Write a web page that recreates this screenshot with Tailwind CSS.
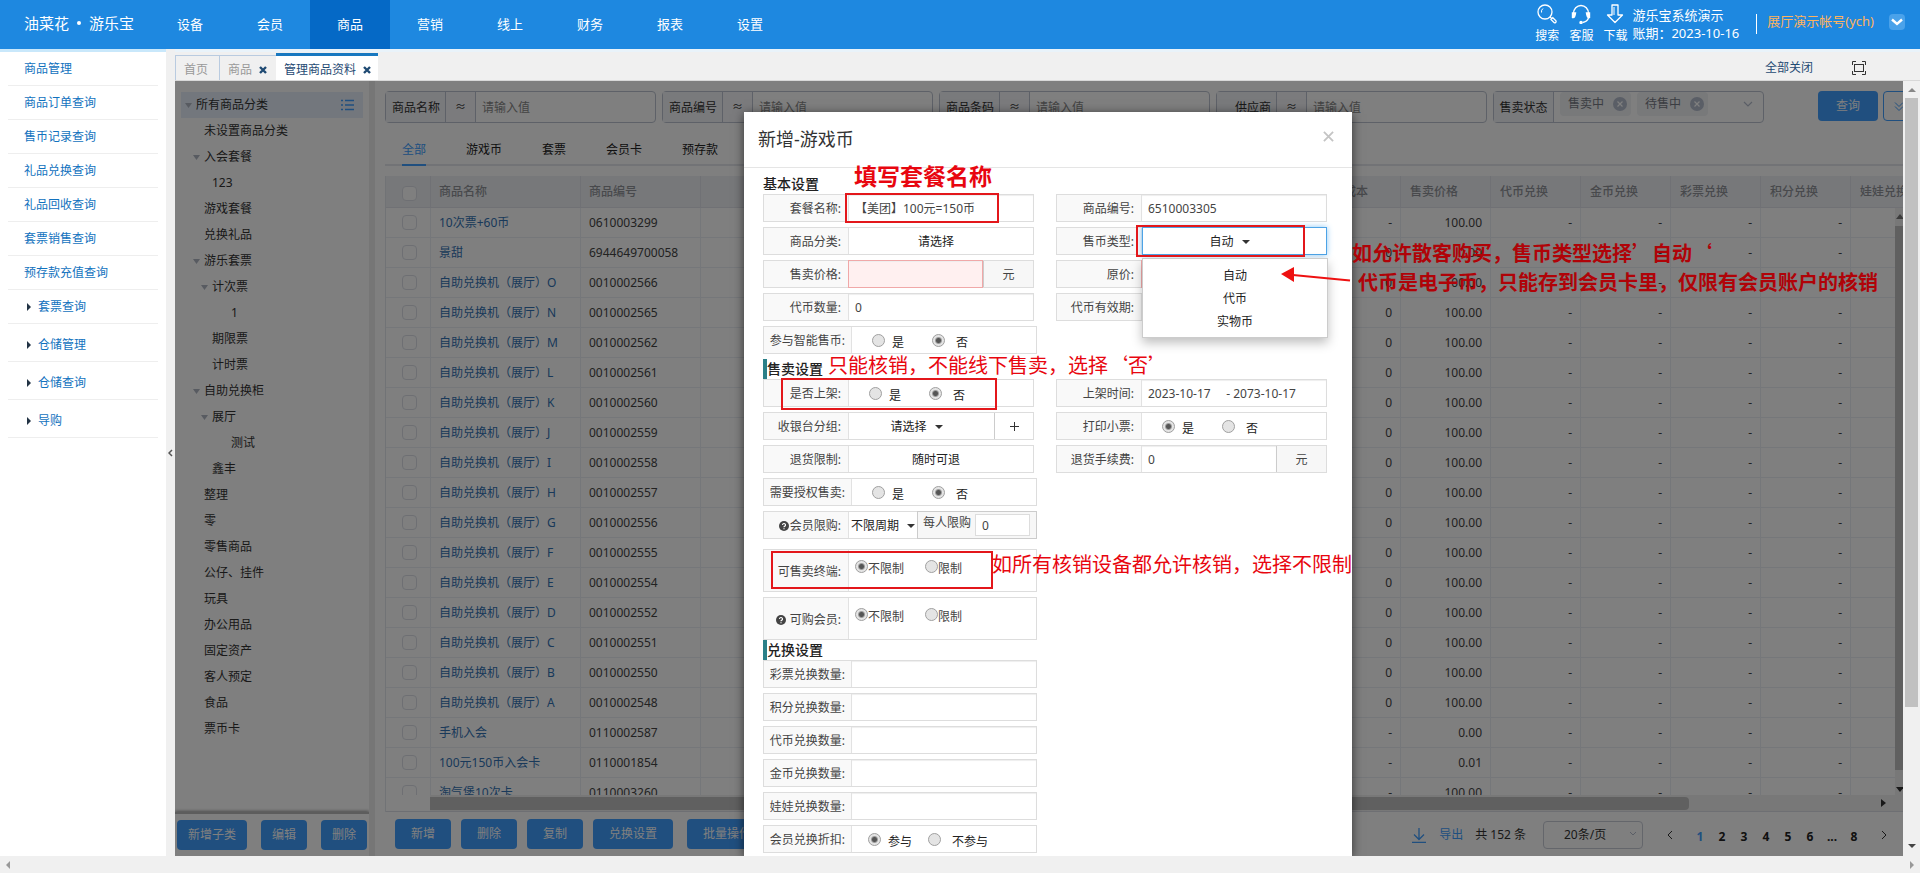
<!DOCTYPE html>
<html lang="zh-CN">
<head>
<meta charset="utf-8">
<meta name="viewport" content="width=device-width, initial-scale=1">
<title>游乐宝 - 管理商品资料</title>
<script src="https://cdn.jsdelivr.net/npm/@tailwindcss/browser@4"></script>
</head>
<body class="flex h-screen flex-col overflow-hidden bg-[#f0f0f0] font-['Noto_Sans','Noto_Sans_CJK_SC',sans-serif] text-[12px] leading-[18px] text-[#333]">

<header class="flex h-[49px] shrink-0 items-stretch bg-[#1e88e0] text-[13px] text-white">
  <a href="#" class="flex w-[150px] items-center gap-2 pl-6 pb-[3px] text-[15px]">油菜花<span class="size-1 rounded-full bg-white"></span>游乐宝</a>
  <nav class="flex">
    <a href="#" class="flex w-20 items-center justify-center pb-[2px]">设备</a>
    <a href="#" class="flex w-20 items-center justify-center pb-[2px]">会员</a>
    <a href="#" class="flex w-20 items-center justify-center bg-[#0569c6] pb-[2px]">商品</a>
    <a href="#" class="flex w-20 items-center justify-center pb-[2px]">营销</a>
    <a href="#" class="flex w-20 items-center justify-center pb-[2px]">线上</a>
    <a href="#" class="flex w-20 items-center justify-center pb-[2px]">财务</a>
    <a href="#" class="flex w-20 items-center justify-center pb-[2px]">报表</a>
    <a href="#" class="flex w-20 items-center justify-center pb-[2px]">设置</a>
  </nav>
  <div class="ml-auto flex gap-[10px] pt-1 text-[12px]">
    <button class="flex flex-col items-center gap-[3px] leading-[18px]">
      <svg width="20" height="20" viewBox="0 0 20 20" fill="none" stroke="#fff" stroke-width="1.3"><circle cx="8" cy="8" r="7"/><path d="M4.5 8.5a4 4 0 0 1 1.5-4" stroke-width="1"/><path d="M13 13l1.5 1.2M14 15.5l1.8-1.8 3.2 3.2c.5 1.2-.8 2.3-1.8 1.8z"/></svg>搜索</button>
    <button class="flex flex-col items-center gap-[3px] leading-[18px]">
      <svg width="22" height="20" viewBox="0 0 22 20" fill="none" stroke="#fff" stroke-width="1.4"><path d="M3.500 9.500a7.500 8 0 0 1 15 0"/><path d="M2.500 9v4.500c2 .4 2.500-1 3-4.500zM19.500 9v4.500c-2 .4-2.500-1-3-4.500z" fill="#fff"/><path d="M18.500 14c-.8 2.500-3 4-6 4.500"/><circle cx="11" cy="18.500" r="1" fill="#fff"/></svg>客服</button>
    <button class="flex flex-col items-center gap-[3px] leading-[18px]">
      <svg width="20" height="20" viewBox="0 0 20 20" fill="none" stroke="#fff" stroke-width="1.3" stroke-linejoin="round"><path d="M7 1h6v10h4.500L10 18.500 2.500 11H7z"/><path d="M9 3v8" stroke-width="1"/></svg>下载</button>
  </div>
  <div class="ml-[5px] pt-[6px] text-[13px] leading-[18px]"><p>游乐宝系统演示</p><p>账期：2023-10-16</p></div>
  <div class="ml-[17px] mt-[14px] h-5 w-px bg-white"></div>
  <a href="#" class="ml-[10px] pt-3 text-[13px] text-[#ffb35c]">展厅演示帐号(ych)</a>
  <button aria-label="账号菜单" class="ml-[15px] mr-[15px] mt-[14px] flex size-4 items-center justify-center rounded-sm bg-[#4aa2ea]">
    <svg width="12" height="8" viewBox="0 0 12 8" fill="none" stroke="#fff" stroke-width="2.400"><path d="M1 1.500l5 4.500 5-4.500"/></svg></button>
</header>

<div class="flex min-h-0 flex-1">
  <aside class="w-[166px] shrink-0 border-t-[3px] border-[#c9e8fb] bg-white px-2 text-[#1272be]">
    <ul>
      <li class="h-[34px] border-b border-[#eee] pl-4 pt-2"><a href="#">商品管理</a></li>
      <li class="h-[34px] border-b border-[#eee] pl-4 pt-2"><a href="#">商品订单查询</a></li>
      <li class="h-[34px] border-b border-[#eee] pl-4 pt-2"><a href="#">售币记录查询</a></li>
      <li class="h-[34px] border-b border-[#eee] pl-4 pt-2"><a href="#">礼品兑换查询</a></li>
      <li class="h-[34px] border-b border-[#eee] pl-4 pt-2"><a href="#">礼品回收查询</a></li>
      <li class="h-[34px] border-b border-[#eee] pl-4 pt-2"><a href="#">套票销售查询</a></li>
      <li class="h-[34px] border-b border-[#eee] pl-4 pt-2"><a href="#">预存款充值查询</a></li>
      <li class="flex h-[34px] items-center gap-[7px] border-b border-[#eee] pl-[19px] pt-px"><svg width="4" height="8"><path d="M0 0l4 4-4 4z" fill="#234"/></svg><a href="#">套票查询</a></li>
      <li class="flex h-[38px] items-center gap-[7px] border-b border-[#eee] pl-[19px] pt-1"><svg width="4" height="8"><path d="M0 0l4 4-4 4z" fill="#234"/></svg><a href="#">仓储管理</a></li>
      <li class="flex h-[38px] items-center gap-[7px] border-b border-[#eee] pl-[19px] pt-1"><svg width="4" height="8"><path d="M0 0l4 4-4 4z" fill="#234"/></svg><a href="#">仓储查询</a></li>
      <li class="flex h-[38px] items-center gap-[7px] border-b border-[#eee] pl-[19px] pt-1"><svg width="4" height="8"><path d="M0 0l4 4-4 4z" fill="#234"/></svg><a href="#">导购</a></li>
    </ul>
  </aside>
  <button aria-label="收起菜单" class="flex w-[9px] shrink-0 items-center justify-center"><svg width="5" height="8" viewBox="0 0 5 8" fill="none" stroke="#555" stroke-width="1.500"><path d="M4 1L1 4l3 3"/></svg></button>

  <div class="flex min-w-0 flex-1 flex-col">
    <div class="flex h-8 shrink-0 items-end border-b border-[#d8d8d8] border-t-[3px] border-t-[#e9f3fa] text-[#999]">
      <a href="#" class="flex h-[25px] w-[45px] items-center border-x border-t border-[#b9cbe0] pl-2 pt-1">首页</a>
      <a href="#" class="flex h-[25px] w-14 items-center gap-[7px] border-t border-[#b9cbe0] pl-2 pt-1">商品<svg width="8" height="8" viewBox="0 0 8 8" stroke="#1f4a73" stroke-width="2.400"><path d="M1 1l6 6M7 1L1 7"/></svg></a>
      <a href="#" class="flex h-[27px] w-[102px] items-center gap-[7px] border-t-[3px] border-[#1878c0] bg-white pl-2 pt-[3px] text-[#1f4a73]">管理商品资料<svg width="8" height="8" viewBox="0 0 8 8" stroke="#1f4a73" stroke-width="2.400"><path d="M1 1l6 6M7 1L1 7"/></svg></a>
      <button class="ml-auto mr-[39px] pb-[3px] text-[#1f4a73]">全部关闭</button>
      <button aria-label="全屏" class="mr-[54px] pb-[5px]"><svg width="14" height="14" viewBox="0 0 14 14" fill="none" stroke="#333"><path d="M.5 4V.5H4M10 .5h3.500V4M13.500 10v3.500H10M4 13.500H.5V10"/><rect x="2.500" y="3.500" width="9" height="7"/></svg></button>
    </div>

    <div class="flex min-h-0 flex-1">
      <main class="relative flex min-w-0 flex-1 overflow-hidden bg-white">
        <!-- category tree -->
        <section class="flex w-[194px] shrink-0 flex-col">
          <ul id="tree" class="min-h-0 flex-1 overflow-hidden px-[6px] pt-[11px] text-[#333]"></ul>
          <div class="flex h-11 shrink-0 justify-between border-t-2 border-[#bbb] px-[2px] pt-[6px] shadow-[0_-1px_3px_#999]">
            <button class="h-[30px] w-[70px] rounded bg-[#409eff] text-white">新增子类</button>
            <button class="h-[30px] w-[46px] rounded bg-[#409eff] text-white">编辑</button>
            <button class="h-[30px] w-[46px] rounded bg-[#409eff] text-white">删除</button>
          </div>
        </section>
        <div class="w-[6px] shrink-0 bg-[#ececec]"></div>

        <!-- product list -->
        <section class="flex min-w-0 flex-1 flex-col pl-[10px]">
          <div class="flex shrink-0 overflow-hidden pt-[10px]">
            <div id="filters" class="flex gap-[6px]"></div>
            <div class="ml-[6px] flex h-8 w-[271px] shrink-0 rounded border border-[#bcc3d0]">
              <span class="flex w-[60px] items-center justify-center border-r border-[#bcc3d0] bg-[#f2f4f8] pt-[2px]">售卖状态</span>
              <span class="ml-[6px] flex h-6 w-[71px] items-center gap-[9px] rounded-sm bg-[#f0f2f5] pl-2 text-[#777b85]">售卖中<svg width="14" height="14" viewBox="0 0 14 14"><circle cx="7" cy="7" r="7" fill="#b4bccc"/><path d="M4.500 4.500l5 5M9.500 4.500l-5 5" stroke="#fff" stroke-width="1.200"/></svg></span>
              <span class="ml-[6px] flex h-6 w-[71px] items-center gap-[9px] rounded-sm bg-[#f0f2f5] pl-2 text-[#777b85]">待售中<svg width="14" height="14" viewBox="0 0 14 14"><circle cx="7" cy="7" r="7" fill="#b4bccc"/><path d="M4.500 4.500l5 5M9.500 4.500l-5 5" stroke="#fff" stroke-width="1.200"/></svg></span>
              <svg class="ml-auto mr-[10px] mt-[9px]" width="10" height="7" viewBox="0 0 10 7" fill="none" stroke="#b4bccc" stroke-width="1.200"><path d="M1 1l4 4 4-4"/></svg>
            </div>
            <button class="ml-[54px] h-[30px] w-[60px] shrink-0 rounded bg-[#409eff] text-white">查询</button>
            <button aria-label="更多条件" class="ml-[5px] flex h-[30px] w-8 shrink-0 items-center rounded border border-[#409eff] pl-[10px]"><svg width="10" height="9" viewBox="0 0 10 9" fill="none" stroke="#409eff"><path d="M1 .5l4 4 4-4M1 4.500l4 4 4-4"/></svg></button>
          </div>

          <nav class="flex h-[43px] shrink-0 items-end gap-10 border-b-2 border-[#e4e7ed] pl-[17px] text-[#222]">
            <a href="#" class="-mb-[2px] border-b-2 border-[#409eff] pb-[5px] text-[#409eff]">全部</a>
            <a href="#" class="pb-[5px]">游戏币</a><a href="#" class="pb-[5px]">套票</a><a href="#" class="pb-[5px]">会员卡</a><a href="#" class="pb-[5px]">预存款</a>
          </nav>

          <div class="relative mt-[10px] min-h-0 flex-1 overflow-hidden border-l border-[#e3e6ec]">
            <table class="w-[calc(100%+38px)] table-fixed border-separate border-spacing-0">
              <colgroup><col class="w-[45px]"><col class="w-[150px]"><col class="w-[120px]"><col><col class="w-[90px]"><col class="w-[90px]"><col class="w-[90px]"><col class="w-[90px]"><col class="w-[90px]"><col class="w-[90px]"><col class="w-[90px]"></colgroup>
              <thead class="text-left text-[#909399]">
                <tr class="h-8 bg-[#eef0f4]">
                  <th class="border-r border-b border-[#e0e3ea] pl-4 pt-1"><input type="checkbox" aria-label="全选" class="block size-[15px] appearance-none rounded-sm border border-[#dcdfe6] bg-white"></th>
                  <th class="border-r border-b border-[#e0e3ea] pl-2 font-medium">商品名称</th>
                  <th class="border-r border-b border-[#e0e3ea] pl-2 font-medium">商品编号</th>
                  <th class="border-r border-b border-[#e0e3ea]"></th>
                  <th class="border-r border-b border-[#e0e3ea] pl-[9px] font-medium">进货成本</th>
                  <th class="border-r border-b border-[#e0e3ea] pl-[9px] font-medium">售卖价格</th>
                  <th class="border-r border-b border-[#e0e3ea] pl-[9px] font-medium">代币兑换</th>
                  <th class="border-r border-b border-[#e0e3ea] pl-[9px] font-medium">金币兑换</th>
                  <th class="border-r border-b border-[#e0e3ea] pl-[9px] font-medium">彩票兑换</th>
                  <th class="border-r border-b border-[#e0e3ea] pl-[9px] font-medium">积分兑换</th>
                  <th class="border-r border-b border-[#e0e3ea] pl-[9px] font-medium">娃娃兑换</th>
                </tr>
              </thead>
              <tbody id="rows" class="text-[#444]"></tbody>
            </table>
            <!-- scrollbars laid over the table body -->
            <div class="absolute top-8 right-0 bottom-4 flex w-2 flex-col items-end overflow-hidden bg-[#f1f1f1]">
              <svg class="mt-[6px] shrink-0" width="7" height="5"><path d="M0 5L4 0l4 5z" fill="#777"/></svg>
              <div class="mt-[7px] w-2 flex-1 bg-[#c1c1c1]"></div>
              <svg class="mt-[17px] mb-1 shrink-0" width="7" height="5"><path d="M0 0h8L4 5z" fill="#333"/></svg>
            </div>
            <div class="absolute inset-x-0 bottom-0 flex h-[17px] items-center border-b border-[#dcdfe6] bg-white pl-11">
              <div class="flex h-full flex-1 items-center bg-[#f1f1f1] pr-[17px]">
                <div class="h-[13px] w-[1259px] rounded-r-sm bg-[#c1c1c1]"></div>
                <svg class="ml-auto shrink-0" width="5" height="8"><path d="M0 0l5 4-5 4z" fill="#333"/></svg>
              </div>
            </div>
          </div>

          <div class="flex h-11 shrink-0 items-start gap-[10px] pl-[10px] pt-[7px]">
            <button class="h-[30px] w-14 shrink-0 rounded bg-[#409eff] text-white">新增</button>
            <button class="h-[30px] w-14 shrink-0 rounded bg-[#409eff] text-white">删除</button>
            <button class="h-[30px] w-14 shrink-0 rounded bg-[#409eff] text-white">复制</button>
            <button class="h-[30px] w-20 shrink-0 rounded bg-[#409eff] text-white">兑换设置</button>
            <button class="ml-1 h-[30px] w-20 shrink-0 rounded bg-[#409eff] text-white">批量操作</button>
            <div class="ml-auto flex h-8 items-center pr-4">
              <svg width="14" height="15" viewBox="0 0 14 15" fill="none" stroke="#409eff" stroke-width="1.300"><path d="M7 0v11M2 6.500l5 5 5-5M0 14.300h14"/></svg>
              <a href="#" class="ml-[13px] text-[#409eff]">导出</a>
              <span class="ml-3">共 152 条</span>
              <div class="relative ml-[17px]">
                <select aria-label="每页条数" class="h-7 w-[100px] appearance-none rounded-sm border border-[#c8ccd6] pl-5"><option>20条/页</option></select>
                <svg class="absolute top-[10px] right-[6px]" width="8" height="6" viewBox="0 0 8 6" fill="none" stroke="#b4bccc"><path d="M1 1l3 3 3-3"/></svg>
              </div>
              <button aria-label="上一页" class="ml-6"><svg width="6" height="10" viewBox="0 0 6 10" fill="none" stroke="#333"><path d="M5 1L1 5l4 4"/></svg></button>
              <div class="ml-4 mr-4 flex pt-[3px] font-bold text-[#222]">
                <button class="w-[22px] text-[#409eff]">1</button><button class="w-[22px]">2</button><button class="w-[22px]">3</button><button class="w-[22px]">4</button><button class="w-[22px]">5</button><button class="w-[22px]">6</button><span class="w-[22px] text-center">...</span><button class="w-[22px]">8</button>
              </div>
              <button aria-label="下一页"><svg width="6" height="10" viewBox="0 0 6 10" fill="none" stroke="#333"><path d="M1 1l4 4-4 4"/></svg></button>
            </div>
          </div>
        </section>

        <!-- dimmed layer with the dialog -->
        <div class="absolute inset-0 flex justify-center bg-black/50 pt-[31px] pl-[18px]">
          <div role="dialog" aria-labelledby="dlg-title" class="relative w-[608px] shrink-0 bg-white shadow-[0_2px_10px_rgba(0,0,0,0.6)]">
            <div class="flex h-14 items-center justify-between border-b border-[#e5e5e5] pb-[2px] pl-[14px] pr-[18px]">
              <h2 id="dlg-title" class="text-[18px] leading-6">新增-游戏币</h2>
              <button aria-label="关闭" class="pb-1"><svg width="11" height="11" viewBox="0 0 12 12" stroke="#c4c4c4" stroke-width="2"><path d="M1 1l10 10M11 1L1 11"/></svg></button>
            </div>
            <form id="form" class="px-[19px] pt-[6px] text-[#444]"></form>

            <!-- notes drawn over the dialog -->
            <div class="absolute inset-0 z-20 pointer-events-none font-['Noto_Sans_CJK_SC',sans-serif] text-[#e8060f] whitespace-nowrap">
              <p class="absolute top-[47px] left-[110px] text-[23px] leading-8 font-bold">填写套餐名称</p>
              <div class="absolute top-[81px] left-[101px] h-[30px] w-[154px] border-2 border-[#e3171b]"></div>
              <div class="absolute top-[113px] left-[392px] h-8 w-[169px] border-2 border-[#e3171b]"></div>
              <svg class="absolute top-[154px] left-[537px]" width="70" height="18" viewBox="0 0 70 18"><path d="M12 9l57 5.500" stroke="#ee1111" stroke-width="2"/><path d="M0 8L13 1v15z" fill="#ee1111"/></svg>
              <p class="absolute top-[239px] left-[84px] text-[20px] leading-7">只能核销，不能线下售卖，选择‘否’</p>
              <div class="absolute top-[266px] left-[37px] h-8 w-[216px] border-2 border-[#e3171b]"></div>
              <div class="absolute top-[439px] left-[27px] h-[38px] w-[222px] border-2 border-[#e3171b]"></div>
              <p class="absolute top-[438px] left-[248px] text-[20px] leading-7">如所有核销设备都允许核销，选择不限制</p>
              <p class="absolute top-[126px] left-[608px] text-[20px] leading-[29px] font-bold text-[#b00308]">如允许散客购买，售币类型选择’自动‘<br><span class="pl-[6px]">代币是电子币，只能存到会员卡里，仅限有会员账户的核销</span></p>
            </div>
          </div>
        </div>
      </main>
      <!-- page scrollbar -->
      <div class="flex w-[17px] shrink-0 flex-col items-center bg-[#f0f0f0]">
        <svg class="mt-[7px]" width="8" height="4"><path d="M0 4l4-4 4 4z" fill="#888"/></svg>
        <div class="mt-[6px] h-[609px] w-[13px] bg-[#c1c1c1]"></div>
        <svg class="mt-auto mb-[8px]" width="8" height="4"><path d="M0 0h8L4 4z" fill="#444"/></svg>
      </div>
    </div>
  </div>
</div>
<div class="flex h-[17px] shrink-0 items-center justify-between bg-[#f0f0f0] px-[6px]">
  <svg width="4" height="8"><path d="M4 0L0 4l4 4z" fill="#999"/></svg>
  <svg width="4" height="8"><path d="M0 0l4 4-4 4z" fill="#999"/></svg>
</div>

<script>
// Category tree: [label, depth, expandable]
const P = ['pl-[3px]', 'pl-[11px]', 'pl-[19px]', 'pl-[38px]'];
const tree = [['所有商品分类',0,1],['未设置商品分类',1],['入会套餐',1,1],['123',2],['游戏套餐',1],['兑换礼品',1],['游乐套票',1,1],['计次票',2,1],['1',3],['期限票',2],['计时票',2],['自助兑换柜',1,1],['展厅',2,1],['测试',3],['鑫丰',2],['整理',1],['零',1],['零售商品',1],['公仔、挂件',1],['玩具',1],['办公用品',1],['固定资产',1],['客人预定',1],['食品',1],['票币卡',1]];
document.getElementById('tree').innerHTML = tree.map(([t, d, open], i) => `
  <li class="flex h-[26px] items-center ${i ? '' : 'bg-[#e6effb]'} ${P[d]}">
    <span class="w-3 shrink-0 pl-px">${open ? '<svg width="7" height="5"><path d="M0 0h7L3.500 5z" fill="#b0b6c2"/></svg>' : ''}</span>${t}
    ${i ? '' : '<svg class="ml-auto mr-[9px]" width="13" height="12" viewBox="0 0 13 12" stroke="#409eff" stroke-width="1.500"><path d="M0 1.500h2M0 6h2M0 10.500h2M4 1.500h9M4 6h9M4 10.500h9"/></svg>'}
  </li>`).join('');

// Search fields
document.getElementById('filters').innerHTML = ['商品名称','商品编号','商品条码','供应商'].map((t, i) => `
  <div class="flex h-8 w-[271px] shrink-0 rounded border border-[#bcc3d0]">
    <label for="f${i}" class="flex w-[60px] items-center justify-end border-r border-[#bcc3d0] bg-[#f2f4f8] pr-[5px] pt-[2px]">${t}</label>
    <span class="flex w-[30px] items-center justify-center border-r border-[#bcc3d0] bg-[#f6f7fa] text-[11px]">≈</span>
    <input id="f${i}" placeholder="请输入值" class="min-w-0 flex-1 pl-[6px] pt-[2px] placeholder:text-[#888]">
  </div>`).join('');

// Product rows: [name, code, cost, price]
const items = [['10次票+60币','0610003299','-','100.00'],['景甜','6944649700058','0','0.00']];
[['O',2566],['N',2565],['M',2562],['L',2561],['K',2560],['J',2559],['I',2558],['H',2557],['G',2556],['F',2555],['E',2554],['D',2552],['C',2551],['B',2550],['A',2548]]
  .forEach(([l, n]) => items.push([`自助兑换机（展厅）${l}`, `001000${n}`, '0', '100.00']));
items.push(['手机入会','0110002587','-','0.00'],['100元150币入会卡','0110001854','-','0.01'],['淘气堡10次卡','0110003260','-','100.00']);
const num = 'border-r border-b border-[#ebeef5] pr-2 text-right';
document.getElementById('rows').innerHTML = items.map(([n, c, cost, price]) => `
  <tr class="h-[30px]">
    <td class="border-r border-b border-[#ebeef5] pl-4"><input type="checkbox" aria-label="${n}" class="block size-[15px] appearance-none rounded-sm border border-[#dcdfe6] bg-white"></td>
    <td class="border-r border-b border-[#ebeef5] pl-2"><a href="#" class="text-[#3272b4]">${n}</a></td>
    <td class="border-r border-b border-[#ebeef5] pl-2">${c}</td>
    <td class="border-r border-b border-[#ebeef5]"></td>
    <td class="${num}">${cost}</td><td class="${num}">${price}</td>
    <td class="${num}">-</td><td class="${num}">-</td><td class="${num}">-</td><td class="${num}">-</td><td class="${num}"></td>
  </tr>`).join('');

// Dialog form
let id = 0;
const q = '<svg class="mr-px" width="10" height="10" viewBox="0 0 10 10"><circle cx="5" cy="5" r="5" fill="#444"/><path d="M3.500 4a1.500 1.500 0 1 1 2 1.400c-.4.2-.5.4-.5.9M5 7.200v1" stroke="#fff" stroke-width="1.200" fill="none"/></svg>';
const caret = '<svg width="8" height="4"><path d="M0 0h8L4 4z" fill="#333"/></svg>';
const row = (label, body, {wide = 0, tall = 0, icon = ''} = {}) => {
  const k = 'x' + (++id);
  return `<div class="flex border border-[#ddd] ${wide ? 'w-[274px]' : 'w-[271px]'} ${tall ? 'h-[43px]' : 'h-7'}">
    <label for="${k}" class="flex shrink-0 items-center justify-end whitespace-nowrap border-r border-[#e2e2e2] bg-[#f9f9f9] pt-[2px] ${wide === 1 ? 'w-[88px] pr-[6px]' : 'w-[85px] pr-[7px]'}">${icon}${label}:</label>
    ${body.replaceAll('$k', k)}</div>`;
};
const input = (v = '', cls = '') => `<input id="$k" value="${v}" class="min-w-0 flex-1 px-[6px] pt-[2px] shadow-[inset_0_1px_1px_#eee] ${cls}">`;
const unit = w => `<span class="flex shrink-0 items-center justify-center border-l border-[#ccc] bg-[#f7f7f7] pt-[2px] ${w}">元</span>`;
const radio = (name, on, first) => `<input type="radio" name="${name}" ${first ? 'id="$k"' : `id="${name}2"`} ${on ? 'checked' : ''} class="size-[13px] shrink-0 appearance-none rounded-full border border-[#a0a0a0] bg-[#e4e4e4] checked:bg-[radial-gradient(circle,#555_2px,#e4e4e4_4px)]">`;
const radios = (a, b, which, pad = 'pl-5') => `<div class="flex flex-1 items-center text-[#222] ${pad}">${radio('$k', which === 0, 1)}<label for="$k" class="ml-[7px] pt-[6px] w-10">${a}</label>${radio('$k', which === 1, 0)}<label for="$k2" class="ml-[11px] pt-[6px]">${b}</label></div>`;
const limits = `<div class="flex flex-1 items-start pl-[6px] pt-[10px]">${radio('$k', true, 1)}<label for="$k" class="w-[57px]">不限制</label>${radio('$k', false, 0)}<label for="$k2">限制</label></div>`;
const pick = (t, c, cls = 'flex-1 pr-[10px]') => `<button type="button" id="$k" class="flex items-center justify-center gap-2 pt-[2px] text-[#222] ${cls}">${t}${c ? caret : ''}</button>`;
const head = (t, bar) => `<h3 class="flex h-5 items-center text-[14px] font-medium text-[#222] ${bar ? 'border-l-4 border-[#2b8088]' : ''}">${t}</h3>`;
const grid = (cells) => `<div class="grid grid-cols-[271px_271px] gap-x-[22px] gap-y-[5px]">${cells.join('')}</div>`;
const empty = '<div></div>';
const menu = `<ul class="absolute top-[30px] -left-px z-10 w-[186px] border border-[#ccc] bg-white pt-[5px] pb-1 text-center leading-[23px] text-[#222] shadow-[0_5px_10px_rgba(0,0,0,0.25)]"><li>自动</li><li>代币</li><li>实物币</li></ul>`;

document.getElementById('form').innerHTML =
  head('基本设置') + grid([
    row('套餐名称', input('【美团】100元=150币')), row('商品编号', input('6510003305')),
    row('商品分类', pick('请选择')),
    row('售币类型', `<div class="relative -my-px -mr-px flex flex-1 border border-[#4da3e6] shadow-[0_0_6px_#8cc8f5]">${pick('自动', 1)}${menu}</div>`),
    row('售卖价格', input('', 'border border-[#f0a8a8] bg-[#fff0f0] -my-px -ml-px') + unit('w-[50px]')),
    row('原价', input('', 'border border-[#f0a8a8] bg-[#fff0f0] -my-px -ml-px')),
    row('代币数量', input('0')), row('代币有效期', input('')),
    row('参与智能售币', radios('是', '否', 1), {wide: 1}), empty,
  ]) + '<div class="h-[5px]"></div>' + head('售卖设置', 1) + grid([
    row('是否上架', radios('是', '否', 1)), row('上架时间', input('2023-10-17&nbsp;&nbsp;&nbsp;&nbsp; - 2073-10-17')),
    row('收银台分组', pick('请选择', 1) + '<button type="button" aria-label="添加分组" class="flex w-[39px] items-center justify-center border-l border-[#ccc]"><svg width="9" height="9" stroke="#333"><path d="M0 4.500h9M4.500 0v9"/></svg></button>'),
    row('打印小票', radios('是', '否', 0)),
    row('退货限制', pick('随时可退')), row('退货手续费', input('0') + unit('w-[50px]')),
    row('需要授权售卖', radios('是', '否', 1), {wide: 1}), empty,
    row('会员限购', pick('不限周期', 1, 'w-[68px] shrink-0 whitespace-nowrap') + '<div class="-my-px -mr-px flex flex-1 items-start gap-1 border border-[#ccc] bg-[#f7f7f7] pl-[5px] pt-[2px]"><label for="each" class="whitespace-nowrap">每人限购</label><input id="each" value="0" class="h-[22px] w-[55px] border border-[#ddd] bg-white pl-[6px]"></div>', {wide: 2, icon: q}), empty,
  ]) + `<div class="mt-[10px] mb-[5px]">${row('可售卖终端', limits, {wide: 2, tall: 1})}</div>`
  + row('可购会员', limits, {wide: 2, tall: 1, icon: q + '&nbsp;'})
  + head('兑换设置', 1) + grid([
    ...['彩票','积分','代币','金币','娃娃'].map(t => row(t + '兑换数量', input(), {wide: 1}) + empty),
    row('会员兑换折扣', radios('参与', '不参与', 0, 'pl-4'), {wide: 1}), empty,
  ]);
</script>
</body>
</html>
